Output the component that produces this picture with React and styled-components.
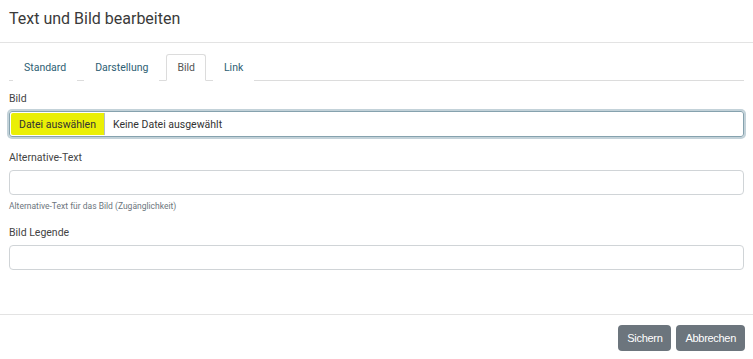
import React from "react";
import styled, { createGlobalStyle } from "styled-components";

const GlobalStyle = createGlobalStyle`
  html, body {
    margin: 0;
    padding: 0;
    background: #fff;
    font-family: Roboto, "Liberation Sans", sans-serif;
    color: #333;
  }
  * { box-sizing: border-box; }
`;

const Modal = styled.div`
  width: 753px;
  height: 359px;
  display: flex;
  flex-direction: column;
  background: #fff;
`;

const Header = styled.div`
  height: 43px;
  padding: 0 9px;
  display: flex;
  align-items: center;
  border-bottom: 1px solid #e3e3e3;
`;

const Title = styled.h5`
  margin: 0 0 6px;
  font-size: 16px;
  font-weight: 400;
  color: #3a3a3a;
`;

const Body = styled.div`
  flex: 1;
  padding: 11px 9px 0;
`;

const Tabs = styled.div`
  display: flex;
  gap: 7px;
  padding-left: 4px;
  border-bottom: 1px solid #dcdcdc;
  height: 27px;
`;

const Tab = styled.div`
  height: 27px;
  padding: 0 10px;
  display: flex;
  align-items: center;
  font-size: 10.5px;
  color: ${p => (p.$active ? "#555" : "#2e6074")};
  background: #fff;
  border: 1px solid ${p => (p.$active ? "#dcdcdc" : "transparent")};
  border-bottom-color: ${p => (p.$active ? "#fff" : "transparent")};
  border-radius: 3px 3px 0 0;
  margin-bottom: -1px;
`;

const Group = styled.div`
  margin-top: ${p => p.$top || 0}px;
`;

const Label = styled.div`
  font-size: 10.5px;
  color: #444;
  line-height: 13px;
  margin-bottom: 6px;
`;

const FileBox = styled.div`
  height: 26px;
  display: flex;
  align-items: stretch;
  border: 1px solid #86a2ae;
  border-radius: 3px;
  box-shadow: 0 0 0 2px #c3d2d9;
  overflow: hidden;
`;

const FileButton = styled.div`
  width: 94px;
  margin: 1px 0 1px 1px;
  padding-left: 8px;
  display: flex;
  align-items: center;
  font-size: 10.5px;
  color: #333;
  background: #eaef06;
  border-right: 1px solid #b5c0c5;
  border-radius: 2px 0 0 2px;
`;

const FileName = styled.div`
  display: flex;
  align-items: center;
  padding-left: 8px;
  font-size: 10.5px;
  color: #333;
`;

const Input = styled.input`
  display: block;
  width: 100%;
  height: 25px;
  border: 1px solid #d0d4d7;
  border-radius: 4px;
  outline: none;
  font: inherit;
`;

const Help = styled.div`
  margin-top: 6px;
  font-size: 8.5px;
  color: #6c757d;
`;

const Footer = styled.div`
  height: 45px;
  border-top: 1px solid #e3e3e3;
  display: flex;
  justify-content: flex-end;
  align-items: flex-start;
  gap: 5px;
  padding: 10px 8px 0 0;
`;

const Button = styled.button`
  height: 26px;
  padding: 0 9px;
  border: none;
  border-radius: 4px;
  background: #6c757d;
  color: #fff;
  font-family: "Liberation Sans", Arial, sans-serif;
  font-size: 11px;
  letter-spacing: -0.3px;
`;

export default function App() {
  return (
    <>
      <GlobalStyle />
      <Modal>
        <Header>
          <Title>Text und Bild bearbeiten</Title>
        </Header>
        <Body>
          <Tabs>
            <Tab>Standard</Tab>
            <Tab>Darstellung</Tab>
            <Tab $active>Bild</Tab>
            <Tab>Link</Tab>
          </Tabs>
          <Group $top={11}>
            <Label>Bild</Label>
            <FileBox>
              <FileButton>Datei auswählen</FileButton>
              <FileName>Keine Datei ausgewählt</FileName>
            </FileBox>
          </Group>
          <Group $top={14}>
            <Label>Alternative-Text</Label>
            <Input type="text" />
            <Help>Alternative-Text für das Bild (Zugänglichkeit)</Help>
          </Group>
          <Group $top={15}>
            <Label>Bild Legende</Label>
            <Input type="text" />
          </Group>
        </Body>
        <Footer>
          <Button>Sichern</Button>
          <Button>Abbrechen</Button>
        </Footer>
      </Modal>
    </>
  );
}
